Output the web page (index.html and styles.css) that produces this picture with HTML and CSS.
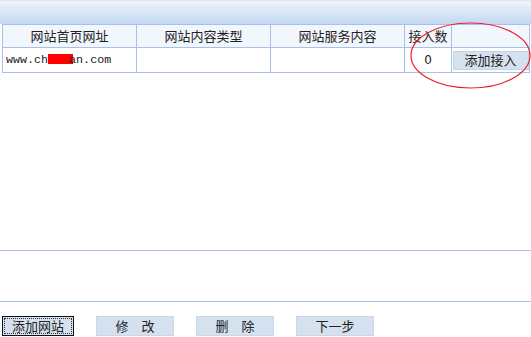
FILE: index.html
```html
<!DOCTYPE html>
<html lang="zh-CN">
<head>
  <meta charset="UTF-8">
  <title>网站列表</title>
  <link rel="stylesheet" href="styles.css">
</head>
<body>

  <div class="top-bar"></div>

  <div class="list-wrap">
    <table class="site-list">
      <tr>
        <th class="col-url">网站首页网址</th>
        <th class="col-type">网站内容类型</th>
        <th class="col-service">网站服务内容</th>
        <th class="col-count">接入数</th>
        <th class="col-action"></th>
      </tr>
      <tr>
        <td class="site-url">www.ch<span class="mask"></span>an.com</td>
        <td></td>
        <td></td>
        <td class="count">0</td>
        <td class="action"><button class="btn-small">添加接入</button></td>
      </tr>
    </table>

    <svg class="mark" width="122" height="68" viewBox="0 0 122 68">
      <ellipse cx="60.5" cy="33.5" rx="59.5" ry="32.5" fill="none" stroke="#e8212b" stroke-width="1.2"/>
    </svg>
  </div>

  <div class="blank"></div>
  <div class="note-box"></div>

  <div class="actions">
    <button class="btn btn-focus">添加网站</button>
    <button class="btn">修　改</button>
    <button class="btn">删　除</button>
    <button class="btn">下一步</button>
  </div>

</body>
</html>
```

FILE: styles.css
```css
body {
  margin: 0;
  padding: 0;
  font-family: "Noto Sans CJK SC", "DejaVu Sans", sans-serif;
  font-size: 13px;
  color: #222;
  background-color: white;
  width: 531px;
  height: 337px;
  overflow: hidden;
}
.top-bar {
  height: 23px;
  border-top: 1px solid #dce8f6;
  background: linear-gradient(to bottom, #eef4fc 0%, #dde9f8 40%, #c3d8f2 100%);
}
.list-wrap {
  position: relative;
  padding-left: 2px;
}
.site-list {
  border-collapse: collapse;
  table-layout: fixed;
  width: 528px;
}
.site-list th,
.site-list td {
  border: 1px solid #a9c0ea;
  height: 22px;
  padding: 0;
  line-height: 16px;
}
.site-list th {
  background-color: #f2f6fd;
  font-weight: normal;
  text-align: center;
}
.col-url,
.col-type,
.col-service {
  width: 133px;
}
.col-count {
  width: 46px;
}
.site-url {
  padding-left: 3px !important;
  font-family: "Liberation Mono", monospace;
  font-size: 11.7px;
  white-space: nowrap;
}
.mask {
  display: inline-block;
  width: 25px;
  height: 10px;
  margin-right: -4px;
  background-color: #ff0000;
  vertical-align: -1px;
}
.count {
  text-align: center;
  font-family: "DejaVu Sans", sans-serif;
  font-size: 12px;
}
.action {
  padding: 1px 0 !important;
  text-align: center;
}
.btn-small {
  width: 76px;
  height: 19px;
  padding: 0;
  border: 1px solid #c3d2e6;
  background-color: #d5e1ef;
  font-family: inherit;
  font-size: 13px;
  line-height: 16px;
  color: #222;
}
.mark {
  position: absolute;
  left: 410px;
  top: -2px;
}
.blank {
  height: 177px;
}
.note-box {
  height: 50px;
  border-top: 1px solid #a9c0ea;
  border-bottom: 1px solid #a9c0ea;
}
.actions {
  display: flex;
  gap: 22px;
  padding: 14px 0 0 2px;
}
.btn {
  width: 78px;
  height: 20px;
  padding: 0;
  border: 1px solid #c9d7e9;
  background-color: #d5e1ef;
  font-family: inherit;
  font-size: 13px;
  line-height: 16px;
  color: #222;
}
.btn-focus {
  width: 72px;
  border: 1px solid #111;
  outline: 1px dotted #333;
  outline-offset: -3px;
}
```
